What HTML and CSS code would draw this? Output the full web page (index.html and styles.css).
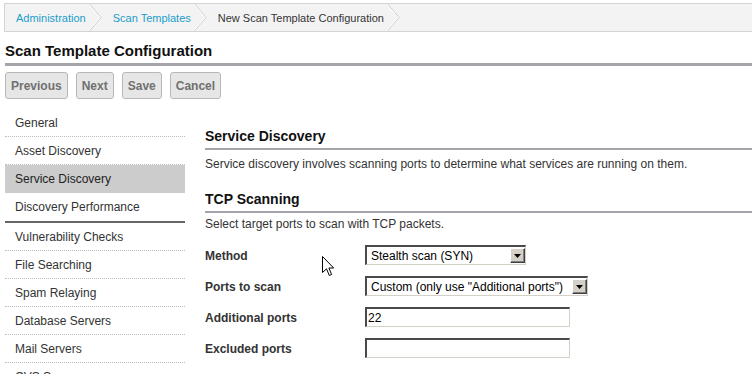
FILE: index.html
```html
<!DOCTYPE html>
<html lang="en">
<head>
    <meta charset="UTF-8">
    <meta name="viewport" content="width=device-width, initial-scale=1.0">
    <title>Scan Template Configuration</title>
    <link rel="stylesheet" href="styles.css">
</head>
<body>
    <div class="crumbs">
        <a class="crumb" href="#">Administration</a>
        <svg class="chev" width="13" height="27" viewBox="0 0 13 27"><polyline points="0.5,0 12,13.5 0.5,27" fill="none" stroke="#cacaca"/><polyline points="-0.5,0 11,13.5 -0.5,27" fill="none" stroke="#fff"/></svg>
        <a class="crumb" href="#">Scan Templates</a>
        <svg class="chev" width="13" height="27" viewBox="0 0 13 27"><polyline points="0.5,0 12,13.5 0.5,27" fill="none" stroke="#cacaca"/><polyline points="-0.5,0 11,13.5 -0.5,27" fill="none" stroke="#fff"/></svg>
        <span class="crumb current">New Scan Template Configuration</span>
        <svg class="chev" width="13" height="27" viewBox="0 0 13 27"><polyline points="0.5,0 12,13.5 0.5,27" fill="none" stroke="#cacaca"/><polyline points="-0.5,0 11,13.5 -0.5,27" fill="none" stroke="#fff"/></svg>
    </div>

    <h1 class="page-title">Scan Template Configuration</h1>

    <div class="toolbar">
        <button class="btn">Previous</button>
        <button class="btn">Next</button>
        <button class="btn">Save</button>
        <button class="btn">Cancel</button>
    </div>

    <div class="layout">
        <ul class="side-nav">
            <li>General</li>
            <li>Asset Discovery</li>
            <li class="active">Service Discovery</li>
            <li class="group-end">Discovery Performance</li>
            <li class="group-start">Vulnerability Checks</li>
            <li>File Searching</li>
            <li>Spam Relaying</li>
            <li>Database Servers</li>
            <li>Mail Servers</li>
            <li>CVS Servers</li>
        </ul>

        <div class="content">
            <h2 class="section-title">Service Discovery</h2>
            <p class="section-text">Service discovery involves scanning ports to determine what services are running on them.</p>

            <h2 class="section-title second">TCP Scanning</h2>
            <p class="section-text tight">Select target ports to scan with TCP packets.</p>

            <div class="form">
                <div class="form-row">
                    <label class="form-label">Method</label>
                    <div class="select select-method">
                        <span class="select-value">Stealth scan (SYN)</span>
                        <span class="select-arrow"><svg width="7" height="4" viewBox="0 0 7 4"><polygon points="0,0 7,0 3.5,4" fill="#000"/></svg></span>
                    </div>
                </div>
                <div class="form-row">
                    <label class="form-label">Ports to scan</label>
                    <div class="select select-ports">
                        <span class="select-value">Custom (only use "Additional ports")</span>
                        <span class="select-arrow"><svg width="7" height="4" viewBox="0 0 7 4"><polygon points="0,0 7,0 3.5,4" fill="#000"/></svg></span>
                    </div>
                </div>
                <div class="form-row">
                    <label class="form-label">Additional ports</label>
                    <input class="field" type="text" value="22">
                </div>
                <div class="form-row">
                    <label class="form-label">Excluded ports</label>
                    <input class="field" type="text" value="">
                </div>
            </div>
        </div>
    </div>

    <svg class="cursor" width="13" height="22" viewBox="0 0 13 22"><path d="M0.5 0.5 L0.5 16.5 L4.5 12.8 L7.3 19.5 L9.6 18.5 L6.9 12 L11.7 12 Z" fill="#fff" stroke="#000" stroke-width="1" stroke-linejoin="miter"/></svg>
</body>
</html>
```

FILE: styles.css
```css
body {
    margin: 0;
    font-family: "Liberation Sans", Arial, sans-serif;
    font-size: 12px;
    color: #333;
    background: #fff;
    overflow: hidden;
}

.crumbs {
    display: flex;
    align-items: center;
    height: 27px;
    margin: 3px 0 0 4px;
    background: #f3f3f3;
    border: 1px solid #d4d4d4;
    border-right: none;
    font-size: 11px;
}
.crumb {
    padding: 1px 3px 0 11px;
    color: #1b9dcb;
    text-decoration: none;
    white-space: nowrap;
}
.crumb.current {
    color: #333;
}
.chev {
    display: block;
    flex: none;
}

.page-title {
    margin: 10px 0 0 5px;
    padding-bottom: 3px;
    font-size: 15px;
    line-height: 18px;
    color: #111;
    border-bottom: 3px solid #a4a4aa;
}

.toolbar {
    display: flex;
    gap: 8px;
    margin: 6px 0 0 5px;
}
.btn {
    height: 27px;
    padding: 1px 5px 0;
    border: 1px solid #b8b8b8;
    border-radius: 3px;
    background: #e6e6e6;
    font-family: inherit;
    font-size: 12px;
    font-weight: bold;
    color: #707070;
}

.layout {
    display: flex;
    gap: 20px;
    margin-top: 10px;
    padding-left: 5px;
}

.side-nav {
    flex: none;
    width: 180px;
    margin: 0;
    padding: 0;
    list-style: none;
}
.side-nav li {
    height: 26px;
    padding: 1px 0 0 10px;
    line-height: 27px;
    border-bottom: 1px dotted #bdbdbd;
    color: #333;
}
.side-nav li.active {
    background: #cccccc;
    color: #222;
    border-bottom-color: #cccccc;
}
.side-nav li.group-end {
    border-bottom: 1px solid #fff;
}
.side-nav li.group-start {
    border-top: 2px solid #666;
}

.content {
    flex: 1;
    padding-top: 19px;
}
.section-title {
    margin: 0;
    padding-bottom: 4px;
    font-size: 14px;
    line-height: 16px;
    color: #111;
    border-bottom: 2px solid #a4a4aa;
}
.section-title.second {
    margin-top: 19px;
}
.section-text {
    margin: 7px 0 0;
    line-height: 15px;
    color: #333;
}
.section-text.tight {
    margin-top: 4px;
}

.form {
    display: flex;
    flex-direction: column;
    gap: 11px;
    margin-top: 13px;
}
.form-row {
    display: flex;
    align-items: center;
    height: 20px;
}
.form-label {
    width: 160px;
    padding-top: 2px;
    font-weight: bold;
    color: #333;
}

.select, .field {
    box-sizing: border-box;
    height: 20px;
    border-style: solid;
    border-width: 2px 1px 1px 2px;
    border-color: #4a4a4a #d4d0c8 #d4d0c8 #4a4a4a;
    background: #fff;
}
.select {
    display: flex;
    align-items: flex-start;
}
.select-method {
    width: 161px;
}
.select-ports {
    width: 223px;
}
.select-value {
    flex: 1;
    padding: 1px 0 0 4px;
    line-height: 16px;
    color: #000;
    white-space: nowrap;
    overflow: hidden;
}
.select-arrow {
    box-sizing: border-box;
    display: flex;
    align-items: center;
    justify-content: center;
    width: 15px;
    height: 15px;
    margin: 1px 0 0;
    background: #d4d0c8;
    border: 1px solid;
    border-color: #fff #404040 #404040 #fff;
    box-shadow: inset -1px -1px #808080;
}
.field {
    width: 205px;
    padding: 1px 1px 0;
    font-family: inherit;
    font-size: 12px;
    color: #000;
    outline: none;
}

.cursor {
    position: absolute;
    left: 322px;
    top: 256px;
    pointer-events: none;
}
```
